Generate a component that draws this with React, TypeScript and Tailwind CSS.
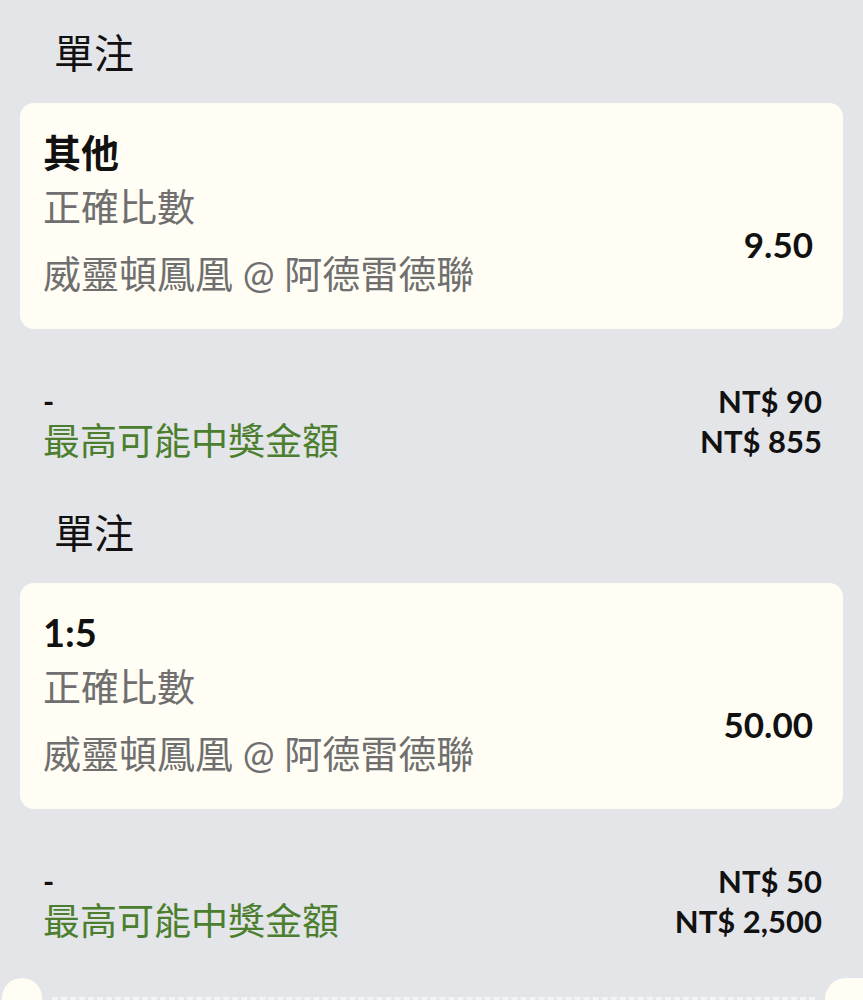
import React from "react";

type Bet = {
  selection: string;
  market: string;
  match: string;
  odds: string;
  stake: string;
  payout: string;
};

const bets: Bet[] = [
  {
    selection: "其他",
    market: "正確比數",
    match: "威靈頓鳳凰 @ 阿德雷德聯",
    odds: "9.50",
    stake: "NT$ 90",
    payout: "NT$ 855",
  },
  {
    selection: "1:5",
    market: "正確比數",
    match: "威靈頓鳳凰 @ 阿德雷德聯",
    odds: "50.00",
    stake: "NT$ 50",
    payout: "NT$ 2,500",
  },
];

const font = "font-['Lato','Noto_Sans_CJK_TC',sans-serif]";

function BetBlock({ bet }: { bet: Bet }) {
  return (
    <div>
      <div className="h-[60px] pl-[54px] text-[40px] leading-[60px] text-[#111]">單注</div>

      <div className="mx-[20px] mt-[20px] flex h-[226px] flex-col rounded-[14px] bg-[#fffdf4] pb-[29px] pl-[23px] pr-[30px] pt-[22px]">
        <div className="text-[38px] font-bold leading-[54px] text-[#111]">{bet.selection}</div>
        <div className="flex items-center">
          <div className="flex-1 text-[38px] text-[#6f6f6f]">
            <div className="leading-[54px]">{bet.market}</div>
            <div className="mt-[13px] leading-[54px]">{bet.match}</div>
          </div>
          <div className="mt-[10px] text-[35px] font-bold text-[#111]">{bet.odds}</div>
        </div>
      </div>

      <div className="mt-[52px] pl-[43px] pr-[41px]">
        <div className="flex h-[40px] items-center justify-between">
          <span className="text-[30px] font-bold text-[#111]">-</span>
          <span className="text-[31px] font-bold text-[#111]">{bet.stake}</span>
        </div>
        <div className="flex h-[40px] items-center justify-between">
          <span className="text-[37px] text-[#4b7f2f]">最高可能中獎金額</span>
          <span className="text-[31px] font-bold text-[#111]">{bet.payout}</span>
        </div>
      </div>
    </div>
  );
}

export default function App() {
  return (
    <div className={`${font} h-[1000px] overflow-hidden bg-[#e4e5e8] pt-[23px]`}>
      <div className="flex flex-col gap-[42px]">
        {bets.map((bet, i) => (
          <BetBlock key={i} bet={bet} />
        ))}
      </div>

      {/* ticket edge of the next slip */}
      <div className="mt-[37px] flex items-start">
        <div className="ml-[2px] h-[42px] w-[40px] shrink-0 rounded-full bg-[#fffdf4]" />
        <div className="mx-[10px] mt-[19px] flex-1 border-t-[3px] border-dashed border-[#f4f4f4]" />
        <div className="h-[42px] w-[38px] shrink-0 rounded-l-full bg-[#fffdf4]" />
      </div>
    </div>
  );
}
